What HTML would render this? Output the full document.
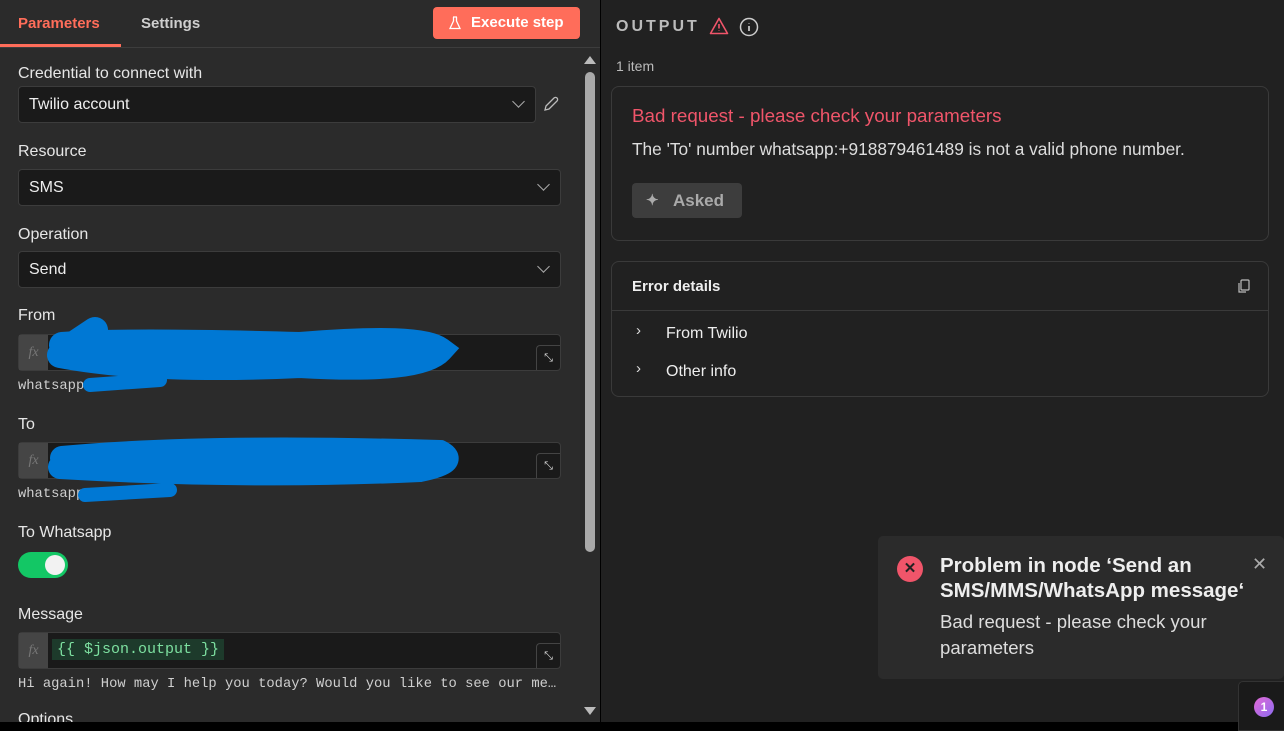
<!DOCTYPE html>
<html><head><style>
*{box-sizing:border-box;margin:0;padding:0}
body{width:1284px;height:730px;overflow:hidden;background:#000;font-family:"Liberation Sans",sans-serif;position:relative}
#left{position:absolute;left:0;top:0;width:600px;height:722px;background:#2b2b2b;overflow:hidden}
#right{position:absolute;left:601px;top:0;width:683px;height:722px;background:#212121}
.tab{position:absolute;top:15px;font-size:15px;font-weight:bold}
.lbl{position:absolute;left:18px;font-size:16px;color:#e6e6e6}
.sel{position:absolute;left:18px;width:543px;height:37px;background:#1a1a1a;border:1px solid #3c3c3c;border-radius:4px;color:#eee;font-size:16px;padding:9px 10px}
.chev{position:absolute;right:12px;top:10px;width:9px;height:9px;border-right:1.5px solid #aaa;border-bottom:1.5px solid #aaa;transform:rotate(45deg)}
.inp{position:absolute;left:18px;width:543px;height:37px;background:#1a1a1a;border:1px solid #3c3c3c;border-radius:4px}
.fx{position:absolute;left:0;top:0;width:29px;height:35px;background:#454545;color:#777;font-family:"Liberation Serif",serif;font-style:italic;font-size:14px;text-align:center;line-height:35px}
.exp{position:absolute;right:0;top:10px;width:24px;height:25px;border:1px solid #444;border-right:none;border-bottom:none;border-radius:4px 0 0 0;color:#ddd;font-size:11px;text-align:center;line-height:24px}
.mono{position:absolute;left:18px;font-family:"Liberation Mono","DejaVu Sans Mono",monospace;font-size:13.8px;color:#cfcfcf}
</style></head><body>
<div id="left">
<div class="tab" style="left:18px;color:#ff6d5a">Parameters</div>
<div style="position:absolute;left:0;top:44px;width:121px;height:3px;background:#ff6d5a"></div>
<div class="tab" style="left:141px;color:#cfcfcf">Settings</div>
<div style="position:absolute;left:0;top:47px;width:600px;height:1px;background:#3d3d3d"></div>
<div style="position:absolute;left:433px;top:7px;width:147px;height:32px;background:#ff6d5a;border-radius:4px;color:#fff;font-weight:bold;font-size:15px;line-height:32px;padding-left:38px">Execute step
<svg style="position:absolute;left:16px;top:9px" width="12" height="14" viewBox="0 0 12 14"><path d="M4 1h4M4.5 1v4L1 12.5h10L7.5 5V1" fill="none" stroke="#fff" stroke-width="1.3"/></svg></div>
<div style="position:absolute;left:584px;top:56px;width:0;height:0;border-left:6px solid transparent;border-right:6px solid transparent;border-bottom:8px solid #bbb"></div>
<div style="position:absolute;left:585px;top:72px;width:10px;height:480px;background:#aaa;border-radius:5px"></div>
<div style="position:absolute;left:584px;top:707px;width:0;height:0;border-left:6px solid transparent;border-right:6px solid transparent;border-top:8px solid #bbb"></div>

<div class="lbl" style="top:65px">Credential to connect with</div>
<div class="sel" style="top:86px;width:518px">Twilio account<div class="chev"></div></div>
<svg style="position:absolute;left:542px;top:95px" width="18" height="18" viewBox="0 0 18 18"><path d="M3 15l1-4 8-8a2 2 0 013 3l-8 8z" fill="none" stroke="#bbb" stroke-width="1.3"/></svg>
<div class="lbl" style="top:143px">Resource</div>
<div class="sel" style="top:169px">SMS<div class="chev"></div></div>
<div class="lbl" style="top:226px">Operation</div>
<div class="sel" style="top:251px">Send<div class="chev"></div></div>
<div class="lbl" style="top:307px">From</div>
<div class="inp" style="top:334px"><div class="fx">fx</div><div class="exp">⤡</div><span style="position:absolute;left:255px;top:9px;font-family:'Liberation Mono',monospace;font-size:14px;color:#7de0a0">em.json</span></div>
<div class="mono" style="top:379px">whatsapp:+1</div>
<div class="lbl" style="top:416px">To</div>
<div class="inp" style="top:442px"><div class="fx">fx</div><div class="exp">⤡</div></div>
<div class="mono" style="top:487px">whatsapp:</div>
<svg style="position:absolute;left:0;top:0" width="600" height="520"><g stroke="#0078d4" stroke-linecap="round" fill="none">
<path d="M65 350 L95 330 M62 345 Q120 340 300 345 Q420 335 440 350 Q420 372 300 365 Q150 372 60 355" stroke-width="26"/>
<path d="M90 385 L160 380" stroke-width="14"/>
<path d="M62 458 Q200 445 440 452 Q460 462 420 470 Q250 478 60 467" stroke-width="24"/>
<path d="M85 495 L170 490" stroke-width="14"/>
</g></svg>
<div class="lbl" style="top:524px">To Whatsapp</div>
<div style="position:absolute;left:18px;top:552px;width:50px;height:26px;border-radius:13px;background:#13c765"><div style="position:absolute;left:27px;top:3px;width:20px;height:20px;border-radius:50%;background:#f2f2f2"></div></div>
<div class="lbl" style="top:606px">Message</div>
<div class="inp" style="top:632px"><div class="fx">fx</div><div class="exp">⤡</div><span style="position:absolute;left:33px;top:6px;background:#1d3a2b;padding:2px 5px;font-family:'Liberation Mono',monospace;font-size:15px;color:#7de0a0">{{ $json.output }}</span></div>
<div class="mono" style="top:677px">Hi again! How may I help you today? Would you like to see our me…</div>
<div class="lbl" style="top:711px">Options</div>
</div>

<div id="right">
<div style="position:absolute;left:15px;top:18px;font-size:16px;font-weight:bold;letter-spacing:3px;color:#bbb">OUTPUT</div>
<svg style="position:absolute;left:108px;top:17px" width="20" height="18" viewBox="0 0 20 18"><path d="M10 1.5L1.5 16.5h17z" fill="none" stroke="#f0556a" stroke-width="1.6" stroke-linejoin="round"/><path d="M10 7v4.5M10 13.5v.5" stroke="#f0556a" stroke-width="1.6"/></svg>
<svg style="position:absolute;left:138px;top:17px" width="20" height="20" viewBox="0 0 20 20"><circle cx="10" cy="10" r="8.5" fill="none" stroke="#ccc" stroke-width="1.5"/><path d="M10 9v5M10 6v.5" stroke="#ccc" stroke-width="1.7"/></svg>
<div style="position:absolute;left:15px;top:58px;font-size:14px;color:#bbb">1 item</div>
<div style="position:absolute;left:10px;top:86px;width:658px;height:155px;border:1px solid #3a3a3a;border-radius:8px">
<div style="position:absolute;left:20px;top:18px;font-size:18.8px;color:#f0556a">Bad request - please check your parameters</div>
<div style="position:absolute;left:20px;top:52px;font-size:17.3px;color:#ddd">The 'To' number whatsapp:+918879461489 is not a valid phone number.</div>
<div style="position:absolute;left:20px;top:96px;width:110px;height:35px;background:#3d3d3d;border-radius:4px;color:#aaa;font-weight:bold;font-size:17px;line-height:35px;padding-left:41px">Asked<span style="position:absolute;left:14px;top:0;font-size:15px">✦</span></div>
</div>
<div style="position:absolute;left:10px;top:261px;width:658px;height:136px;border:1px solid #3a3a3a;border-radius:8px">
<div style="position:absolute;left:20px;top:16px;font-size:15px;font-weight:bold;color:#eee">Error details</div>
<svg style="position:absolute;left:625px;top:17px" width="14" height="15" viewBox="0 0 14 15"><rect x="4" y="1" width="8" height="10" rx="1" fill="none" stroke="#bbb" stroke-width="1.2"/><path d="M2 4v9h7" fill="none" stroke="#bbb" stroke-width="1.2"/></svg>
<div style="position:absolute;left:0;top:48px;width:656px;height:1px;background:#3a3a3a"></div>
<div style="position:absolute;left:24px;top:60px;font-size:15px;color:#ddd">›</div>
<div style="position:absolute;left:54px;top:63px;font-size:16px;color:#eee">From Twilio</div>
<div style="position:absolute;left:24px;top:98px;font-size:15px;color:#ddd">›</div>
<div style="position:absolute;left:54px;top:101px;font-size:16px;color:#eee">Other info</div>
</div>
<div style="position:absolute;left:277px;top:536px;width:406px;height:143px;background:#2b2b2b;border-radius:5px">
<div style="position:absolute;left:19px;top:20px;width:26px;height:26px;border-radius:50%;background:#f0556a;color:#222;font-size:15px;font-weight:bold;text-align:center;line-height:26px">✕</div>
<div style="position:absolute;left:62px;top:17px;font-size:20.5px;font-weight:bold;color:#eee;line-height:25px;white-space:nowrap">Problem in node ‘Send an<br>SMS/MMS/WhatsApp message‘</div>
<div style="position:absolute;left:62px;top:73px;font-size:18.6px;color:#ddd;line-height:26px;white-space:nowrap">Bad request - please check your<br>parameters</div>
<div style="position:absolute;left:374px;top:18px;font-size:18px;color:#aaa">✕</div>
</div>
<div style="position:absolute;left:637px;top:681px;width:50px;height:50px;background:#1a1a1a;border:1px solid #333;border-radius:5px 0 0 0">
<div style="position:absolute;left:15px;top:15px;width:20px;height:20px;border-radius:50%;background:linear-gradient(135deg,#e46ad6,#8c6bf0);color:#fff;font-size:12px;font-weight:bold;text-align:center;line-height:20px">1</div></div>
</div>
</body></html>
